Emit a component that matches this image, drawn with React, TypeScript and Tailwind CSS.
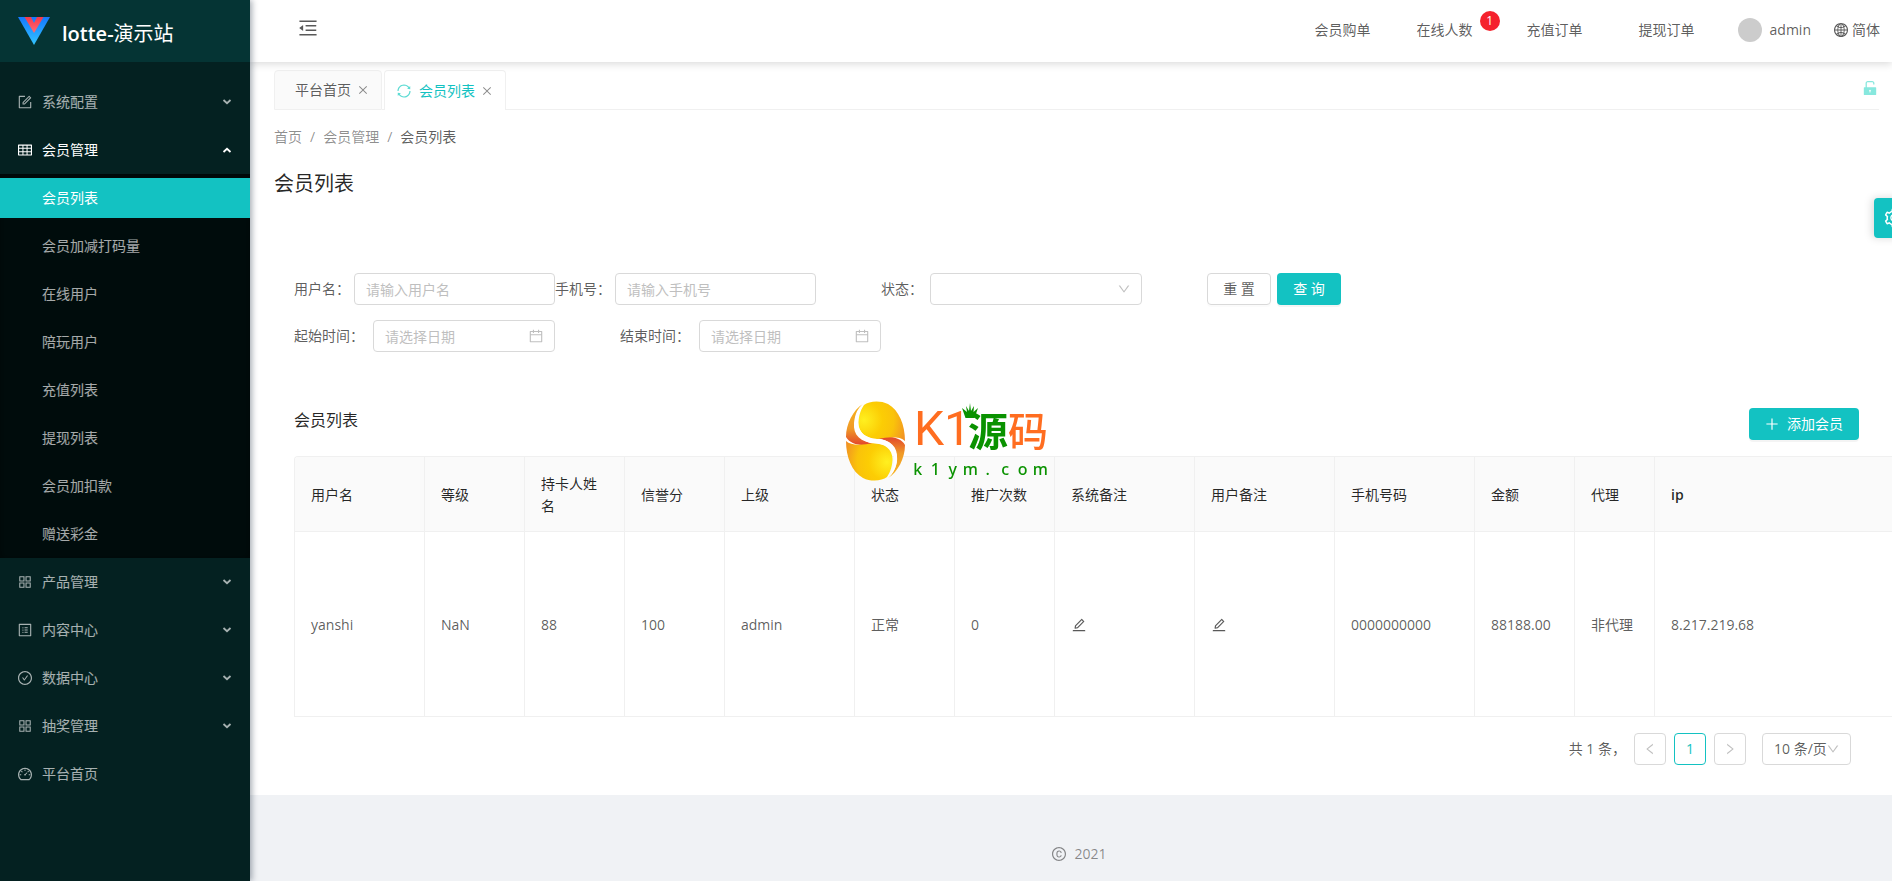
import React from 'react';
import clsx from 'clsx';
import {
  AiFillUnlock,
  AiOutlineAppstore,
  AiOutlineCalendar,
  AiOutlineCheckCircle,
  AiOutlineClose,
  AiOutlineCopyright,
  AiOutlineDashboard,
  AiOutlineDown,
  AiOutlineEdit,
  AiOutlineForm,
  AiOutlineGlobal,
  AiOutlineLeft,
  AiOutlineMenuFold,
  AiOutlinePlus,
  AiOutlineProfile,
  AiOutlineRight,
  AiOutlineSetting,
  AiOutlineSync,
  AiOutlineTable,
} from 'react-icons/ai';

const menus = [
  { title: '系统配置', icon: AiOutlineForm, arrow: true },
  {
    title: '会员管理',
    icon: AiOutlineTable,
    arrow: true,
    open: true,
    children: [
      '会员列表',
      '会员加减打码量',
      '在线用户',
      '陪玩用户',
      '充值列表',
      '提现列表',
      '会员加扣款',
      '赠送彩金',
    ],
  },
  { title: '产品管理', icon: AiOutlineAppstore, arrow: true },
  { title: '内容中心', icon: AiOutlineProfile, arrow: true },
  { title: '数据中心', icon: AiOutlineCheckCircle, arrow: true },
  { title: '抽奖管理', icon: AiOutlineAppstore, arrow: true },
  { title: '平台首页', icon: AiOutlineDashboard, arrow: false },
];

const columns = [
  { title: '用户名', width: 'w-[130px]', value: 'yanshi' },
  { title: '等级', width: 'w-[100px]', value: 'NaN' },
  { title: '持卡人姓名', width: 'w-[100px]', value: '88' },
  { title: '信誉分', width: 'w-[100px]', value: '100' },
  { title: '上级', width: 'w-[130px]', value: 'admin' },
  { title: '状态', width: 'w-[100px]', value: '正常' },
  { title: '推广次数', width: 'w-[100px]', value: '0' },
  { title: '系统备注', width: 'w-[140px]', edit: true },
  { title: '用户备注', width: 'w-[140px]', edit: true },
  { title: '手机号码', width: 'w-[140px]', value: '0000000000' },
  { title: '金额', width: 'w-[100px]', value: '88188.00' },
  { title: '代理', width: 'w-[80px]', value: '非代理' },
  { title: 'ip', width: 'w-auto font-semibold', value: '8.217.219.68' },
];

const Logo = () => (
  <svg width="32" height="28" viewBox="0 0 32 28" aria-hidden="true">
    <defs>
      <linearGradient id="logoBlue" x1="0" y1="0" x2="0" y2="1">
        <stop offset="0" stopColor="#1478ff" />
        <stop offset="1" stopColor="#33c5ff" />
      </linearGradient>
      <linearGradient id="logoRed" x1="0" y1="0" x2="0" y2="1">
        <stop offset="0" stopColor="#f5384a" />
        <stop offset="1" stopColor="#ff6b74" />
      </linearGradient>
    </defs>
    <path d="M0 0H32L16 28Z" fill="url(#logoBlue)" />
    <path d="M6.500 0H13L16 6L19 0H25.500L16 16Z" fill="url(#logoRed)" />
  </svg>
);

const MenuArrow = ({ up }: { up?: boolean }) => (
  <svg width="10" height="8" viewBox="0 0 10 8" className={clsx('ml-auto', up && 'rotate-180')} aria-hidden="true">
    <path d="M1.500 2L5 5.200L8.500 2" fill="none" stroke="currentColor" strokeWidth="1.800" />
  </svg>
);

const Sidebar: React.FC = () => (
  <aside className="relative z-20 w-[250px] shrink-0 bg-[#042121] text-white/65 shadow-[2px_0_6px_rgba(0,21,41,0.35)]">
    <a href="#" className="flex h-[62px] items-center bg-[#053434] pl-[18px] text-white">
      <Logo />
      <h1 className="ml-3 pt-1.5 text-xl font-semibold">
        lotte-<span className="font-normal">演示站</span>
      </h1>
    </a>
    <nav className="pt-4">
      {menus.map(({ title, icon: Icon, arrow, open, children }) => (
        <div key={title}>
          <button className={clsx('flex h-12 w-full items-center pr-[18px] pl-[17px]', open && 'text-white')}>
            <Icon size={16} />
            <span className="ml-[9px]">{title}</span>
            {arrow && <MenuArrow up={open} />}
          </button>
          {children && (
            <ul className="bg-[#000c0c] shadow-[inset_0_2px_8px_rgba(0,0,0,0.45)]">
              {children.map((child, i) => (
                <li key={child} className="py-1">
                  <a
                    href="#"
                    className={clsx('flex h-10 items-center pl-[42px]', i === 0 && 'bg-[#13c2c2] text-white')}
                  >
                    {child}
                  </a>
                </li>
              ))}
            </ul>
          )}
        </div>
      ))}
    </nav>
  </aside>
);

const Header: React.FC = () => (
  <header className="relative z-10 flex h-[62px] items-center bg-white pr-3 pb-0.5 pl-[47px] shadow-[0_2px_8px_rgba(0,0,0,0.15)]">
    <button aria-label="收起菜单" className="pb-1">
      <AiOutlineMenuFold size={22} />
    </button>
    <div className="ml-auto flex items-center">
      <a href="#" className="mr-[46px]">会员购单</a>
      <a href="#" className="relative mr-[54px]">
        在线人数
        <span className="absolute -top-2 -right-[27px] flex h-5 w-5 items-center justify-center rounded-full bg-[#f5222d] text-xs text-white">
          1
        </span>
      </a>
      <a href="#" className="mr-14">充值订单</a>
      <a href="#">提现订单</a>
      <button className="ml-[43px] flex items-center">
        <span className="mr-2 h-6 w-6 rounded-full bg-[#ccc]" />
        admin
      </button>
      <button className="ml-[22px] flex items-center gap-[3px]">
        <AiOutlineGlobal size={16} />
        简体
      </button>
    </div>
  </header>
);

const Tabs: React.FC = () => (
  <div className="mr-[13px] ml-6 flex h-10 items-stretch">
    <div className="flex items-center rounded-t border border-[#f0f0f0] bg-[#fafafa] pr-3 pl-5">
      <a href="#">平台首页</a>
      <button aria-label="关闭" className="ml-1.5 text-black/45">
        <AiOutlineClose size={12} />
      </button>
    </div>
    <div className="w-[2px] border-b border-[#f0f0f0]" />
    <div className="flex items-center rounded-t border border-b-0 border-[#f0f0f0] bg-white pr-3 pl-[11px] text-[#13c2c2]">
      <AiOutlineSync size={16} className="mr-[7px] text-[#5cdbd3]" />
      <a href="#">会员列表</a>
      <button aria-label="关闭" className="ml-1.5 text-black/45">
        <AiOutlineClose size={12} />
      </button>
    </div>
    <div className="flex flex-1 items-center justify-end border-b border-[#f0f0f0] pb-1 text-[#87e8de]">
      <button aria-label="锁定">
        <AiFillUnlock size={18} />
      </button>
    </div>
  </div>
);

const TextField = ({ id, label, placeholder }: { id: string; label: string; placeholder: string }) => (
  <div className="flex items-center">
    <label htmlFor={id} className="w-[60px]">{label}：</label>
    <input
      id={id}
      type="text"
      placeholder={placeholder}
      className="h-8 w-[201px] rounded border border-[#d9d9d9] px-[11px] placeholder:text-[#bfbfbf]"
    />
  </div>
);

const DateField = ({ id, label }: { id: string; label: string }) => (
  <div className="flex items-center">
    <label htmlFor={id} className="w-[79px]">{label}：</label>
    <div className="relative">
      <input
        id={id}
        type="text"
        placeholder="请选择日期"
        className="h-8 w-[182px] rounded border border-[#d9d9d9] px-[11px] placeholder:text-[#bfbfbf]"
      />
      <AiOutlineCalendar size={16} className="absolute top-2 right-[11px] text-black/25" />
    </div>
  </div>
);

const SearchForm: React.FC = () => (
  <form className="flex flex-col gap-[15px]">
    <div className="flex items-center">
      <TextField id="username" label="用户名" placeholder="请输入用户名" />
      <TextField id="phone" label="手机号" placeholder="请输入手机号" />
      <label htmlFor="status" className="ml-[65px] w-[49px]">状态：</label>
      <div className="relative">
        <select id="status" className="h-8 w-[212px] appearance-none rounded border border-[#d9d9d9] px-[11px]">
          <option value="" />
        </select>
        <AiOutlineDown size={14} className="pointer-events-none absolute top-[9px] right-[11px] text-black/25" />
      </div>
      <button
        type="reset"
        className="ml-[65px] h-8 w-16 rounded border border-[#d9d9d9] shadow-[0_2px_0_rgba(0,0,0,0.015)]"
      >
        重 置
      </button>
      <button
        type="button"
        className="ml-[6px] h-8 w-16 rounded bg-[#13c2c2] text-white shadow-[0_2px_0_rgba(0,0,0,0.045)]"
      >
        查 询
      </button>
    </div>
    <div className="flex items-center gap-[65px]">
      <DateField id="startTime" label="起始时间" />
      <DateField id="endTime" label="结束时间" />
    </div>
  </form>
);

const MemberTable: React.FC = () => (
  <div className="-mr-[33px] overflow-hidden rounded-tl border-t border-l border-[#f0f0f0]">
    <table className="w-full table-fixed border-separate border-spacing-0 text-left">
      <thead className="bg-[#fafafa] text-black/85">
        <tr className="h-[75px]">
          {columns.map((col) => (
            <th
              key={col.title}
              className={clsx(
                'border-r border-b border-[#f0f0f0] px-4 pt-0.5 last:border-r-0',
                col.title !== 'ip' && 'font-normal',
                col.width,
              )}
            >
              {col.title}
            </th>
          ))}
        </tr>
      </thead>
      <tbody>
        <tr className="h-[185px]">
          {columns.map((col) => (
            <td key={col.title} className="border-r border-b border-[#f0f0f0] px-4 pt-0.5 last:border-r-0">
              {col.edit ? (
                <button aria-label="编辑" className="block">
                  <AiOutlineEdit size={16} />
                </button>
              ) : (
                col.value
              )}
            </td>
          ))}
        </tr>
      </tbody>
    </table>
  </div>
);

const Pagination: React.FC = () => (
  <div className="mt-4 flex items-center justify-end pr-2">
    <span className="mr-2">共 1 条，</span>
    <button
      aria-label="上一页"
      className="flex h-8 w-8 items-center justify-center rounded border border-[#d9d9d9] text-black/25"
    >
      <AiOutlineLeft size={14} />
    </button>
    <button className="ml-2 h-8 w-8 rounded border border-[#13c2c2] text-[#13c2c2]">1</button>
    <button
      aria-label="下一页"
      className="ml-2 flex h-8 w-8 items-center justify-center rounded border border-[#d9d9d9] text-black/25"
    >
      <AiOutlineRight size={14} />
    </button>
    <div className="relative ml-4">
      <select aria-label="每页条数" className="h-8 w-[89px] appearance-none rounded border border-[#d9d9d9] pl-[11px]">
        <option>10 条/页</option>
      </select>
      <AiOutlineDown size={14} className="pointer-events-none absolute top-[9px] right-[11px] text-black/25" />
    </div>
  </div>
);

const Watermark: React.FC = () => (
  <div className="pointer-events-none fixed top-1/2 left-1/2 z-30 flex h-20 w-[200px] -translate-x-1/2 -translate-y-1/2">
    <svg width="60" height="80" viewBox="0 0 60 80" className="shrink-0" aria-hidden="true">
      <defs>
        <radialGradient id="eggTop" gradientUnits="userSpaceOnUse" cx="18" cy="19" r="46">
          <stop offset="0" stopColor="#fff020" />
          <stop offset="0.4" stopColor="#fccd04" />
          <stop offset="0.65" stopColor="#fac30a" />
          <stop offset="1" stopColor="#f08a28" />
        </radialGradient>
        <radialGradient id="eggBottom" gradientUnits="userSpaceOnUse" cx="41" cy="61" r="46">
          <stop offset="0" stopColor="#fff020" />
          <stop offset="0.4" stopColor="#fccd04" />
          <stop offset="0.65" stopColor="#fac30a" />
          <stop offset="1" stopColor="#f08a28" />
        </radialGradient>
        <linearGradient id="eggLeft" x1="0" y1="0" x2="0" y2="1">
          <stop offset="0" stopColor="#f8b51c" />
          <stop offset="0.6" stopColor="#f09a28" />
          <stop offset="1" stopColor="#e2452c" />
        </linearGradient>
        <linearGradient id="eggRight" x1="0" y1="1" x2="0" y2="0">
          <stop offset="0" stopColor="#f8b51c" />
          <stop offset="0.6" stopColor="#f09a28" />
          <stop offset="1" stopColor="#e2452c" />
        </linearGradient>
      </defs>
      <path d="M17 3C7 9 0 23 0 36C4 43 14 46 30 43C14 41 7 34 8 22C9 12 12 7 17 3Z" fill="url(#eggLeft)" />
      <path d="M42 77C52 71 59 57 59 44C55 37 45 34 29 37C45 39 52 46 51 58C50 68 47 73 42 77Z" fill="url(#eggRight)" />
      <path d="M18 4C23 0 34 -1 42 3C53 9 59 24 59 40C54 35 42 36 32 38C20 38 12 31 12.500 21C13 12 16 7 18 4Z" fill="url(#eggTop)" />
      <path d="M41 76C36 80 25 81 17 77C6 71 0 56 0 40C5 45 17 44 27 42C39 42 47 49 46.500 59C46 68 43 73 41 76Z" fill="url(#eggBottom)" />
      <path d="M18 3C11 9 8 17 9 24C10 34 17 42 29 42.500C40 43 48 48 48 59C48 67 46 73 42 77C48 71 52 64 51 55C49 45 43 38 31 38C19 37 12 31 12 21C12 13 14 8 18 3Z" fill="#fff" />
    </svg>
    <div className="relative ml-2 flex-1">
      <div className="flex items-center font-['Noto_Sans_CJK_SC'] text-[40px] leading-[56px] text-[#ff6d20]">
        <span className="w-[54px] font-['Roboto'] text-5xl leading-[56px]">K1</span>
        <span className="font-bold text-[#0a9200]">源</span>
        <span className="font-medium">码</span>
      </div>
      <svg width="16" height="16" viewBox="0 0 16 16" className="absolute top-[2px] left-12" aria-hidden="true">
        <path d="M3.500 15L0 5L5 9L4 3L7 8L8 0L9 8L12 3L11.500 9L16 5L12.500 15Z" fill="#0a9200" />
      </svg>
      <div className="-ml-[5px] grid w-[140px] grid-cols-8 text-center font-['Noto_Sans'] text-base leading-6 font-medium text-[#0a9200]">
        {'k1ym.com'.split('').map((char, i) => (
          <span key={i}>{char}</span>
        ))}
      </div>
    </div>
  </div>
);

const App: React.FC = () => {
  return (
    <div className="flex min-h-screen overflow-hidden bg-[#f0f2f5] font-['Open_Sans','Noto_Sans_CJK_SC',sans-serif] text-sm leading-[22px] text-black/65">
      <Sidebar />
      <div className="flex min-w-0 flex-1 flex-col">
        <Header />
        <main className="bg-white pt-2 pb-[30px]">
          <Tabs />
          <div className="px-6 pt-4">
            <nav className="flex gap-2 text-black/45">
              <a href="#">首页</a>
              <span>/</span>
              <a href="#">会员管理</a>
              <span>/</span>
              <span className="text-black/65">会员列表</span>
            </nav>
            <h2 className="mt-5 text-xl leading-8 text-black/85">会员列表</h2>
          </div>
          <section className="mt-[73px] pr-[33px] pl-11">
            <SearchForm />
            <div className="mt-14 mb-4 flex items-center justify-between">
              <h3 className="pb-2 text-base leading-6 text-black/85">会员列表</h3>
              <button className="flex h-8 items-center rounded bg-[#13c2c2] pr-4 pl-[15px] text-white shadow-[0_2px_0_rgba(0,0,0,0.045)]">
                <AiOutlinePlus size={16} className="mr-[7px]" />
                添加会员
              </button>
            </div>
            <MemberTable />
            <Pagination />
          </section>
        </main>
        <footer className="flex items-center justify-center pt-12 pb-4 pl-4 text-black/45">
          <AiOutlineCopyright size={16} className="mr-[7px]" />
          2021
        </footer>
      </div>
      <button
        aria-label="设置"
        className="fixed top-[198px] -right-[22px] z-10 flex h-10 w-10 items-center justify-center rounded-l bg-[#13c2c2] text-white shadow-[-2px_0_8px_rgba(0,0,0,0.15)]"
      >
        <AiOutlineSetting size={22} />
      </button>
      <Watermark />
    </div>
  );
};

export default App;
